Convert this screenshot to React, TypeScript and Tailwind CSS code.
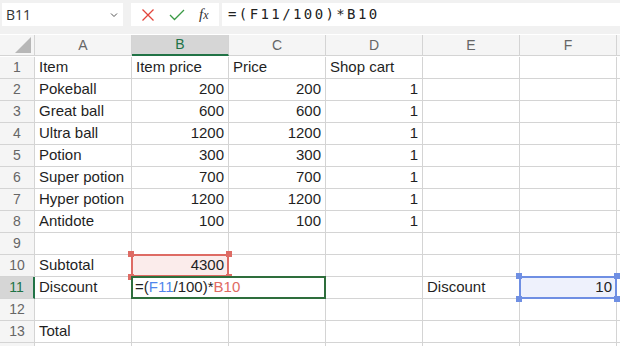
import React from "react";

type Cell = { v?: string; num?: boolean };

const cols = ["A", "B", "C", "D", "E", "F"];

const rows: Cell[][] = [
  [{ v: "Item" }, { v: "Item price" }, { v: "Price" }, { v: "Shop cart" }, {}, {}],
  [{ v: "Pokeball" }, { v: "200", num: true }, { v: "200", num: true }, { v: "1", num: true }, {}, {}],
  [{ v: "Great ball" }, { v: "600", num: true }, { v: "600", num: true }, { v: "1", num: true }, {}, {}],
  [{ v: "Ultra ball" }, { v: "1200", num: true }, { v: "1200", num: true }, { v: "1", num: true }, {}, {}],
  [{ v: "Potion" }, { v: "300", num: true }, { v: "300", num: true }, { v: "1", num: true }, {}, {}],
  [{ v: "Super potion" }, { v: "700", num: true }, { v: "700", num: true }, { v: "1", num: true }, {}, {}],
  [{ v: "Hyper potion" }, { v: "1200", num: true }, { v: "1200", num: true }, { v: "1", num: true }, {}, {}],
  [{ v: "Antidote" }, { v: "100", num: true }, { v: "100", num: true }, { v: "1", num: true }, {}, {}],
  [{}, {}, {}, {}, {}, {}],
  [{ v: "Subtotal" }, { v: "4300", num: true }, {}, {}, {}, {}],
  [{ v: "Discount" }, {}, {}, {}, { v: "Discount" }, { v: "10", num: true }],
  [{}, {}, {}, {}, {}, {}],
  [{ v: "Total" }, {}, {}, {}, {}, {}],
  [{}, {}, {}, {}, {}, {}],
];

function Handles({ color }: { color: string }) {
  const pos = ["-left-[4px] -top-[4px]", "-right-[4px] -top-[4px]", "-left-[4px] -bottom-[4px]", "-right-[4px] -bottom-[4px]"];
  return (
    <>
      {pos.map((p, i) => (
        <span key={i} className={`absolute ${p} w-[6px] h-[6px] ${color} z-20`} />
      ))}
    </>
  );
}

export default function App() {
  return (
    <div className="w-[620px] h-[346px] overflow-hidden bg-white font-['Liberation_Sans',sans-serif] text-[15px] text-[#1f1f1f]">
      {/* Formula bar */}
      <div className="h-[34px] bg-[#f1f1f1] flex items-start pt-[3px] gap-[8px] pl-[2px]">
        <div className="w-[121px] h-[23px] bg-white flex items-center justify-between pl-[4px] pr-[5px]">
          <span className="text-[14px] text-[#333] font-['Open_Sans',sans-serif]">B11</span>
          <svg width="8" height="6" viewBox="0 0 8 6">
            <path d="M1 1.5 L4 4.5 L7 1.5" fill="none" stroke="#555" strokeWidth="1" />
          </svg>
        </div>
        <div className="w-[88px] h-[23px] bg-white flex items-center gap-[14px] pl-[10px]">
          <svg width="14" height="14" viewBox="0 0 14 14">
            <path d="M1.5 1.5 L12.5 12.5 M12.5 1.5 L1.5 12.5" stroke="#e2453c" strokeWidth="1.3" />
          </svg>
          <svg width="16" height="12" viewBox="0 0 16 12">
            <path d="M1 6 L5.5 10.5 L15 1" fill="none" stroke="#3a9a45" strokeWidth="1.3" />
          </svg>
          <span className="font-['Liberation_Serif',serif] italic text-[15px] text-[#333] leading-none">
            f<span className="text-[12px]">x</span>
          </span>
        </div>
        <div className="flex-1 h-[23px] bg-white flex items-center pl-[6px] -ml-[5px]">
          <span className="font-['DejaVu_Sans_Mono',monospace] text-[14px] tracking-[2.4px] text-[#222]">=(F11/100)*B10</span>
        </div>
      </div>

      {/* Grid */}
      <div className="grid grid-cols-[35px_repeat(6,97px)_1fr] auto-rows-[22px] mt-[1px]">
        {/* header row */}
        <div className="h-[21px] bg-[#f5f5f5] border-r border-b border-[#d4d4d4] relative overflow-hidden">
          <svg className="absolute right-[3px] bottom-[2px]" width="16" height="16" viewBox="0 0 16 16">
            <polygon points="16,0 16,16 0,16" fill="#b7b7b7" />
          </svg>
        </div>
        {cols.map((c) => (
          <div
            key={c}
            className={`h-[21px] flex items-center justify-center text-[14px] border-r border-[#d4d4d4] ${
              c === "B" ? "bg-[#d6d6d6] text-[#217346] border-b-2 border-b-[#217346]" : "bg-[#f5f5f5] text-[#666] border-b"
            }`}
          >
            {c}
          </div>
        ))}
        <div className="h-[21px] bg-[#f5f5f5] border-b border-[#d4d4d4]" />

        {rows.map((row, ri) => {
          const r = ri + 1;
          const active = r === 11;
          return (
            <React.Fragment key={r}>
              <div
                className={`flex items-center justify-center text-[14px] border-b border-[#d4d4d4] ${
                  active ? "bg-[#d6d6d6] text-[#217346] border-r-2 border-r-[#217346]" : "bg-[#f5f5f5] text-[#666] border-r"
                }`}
              >
                {r < 14 ? r : ""}
              </div>
              {row.map((cell, ci) => {
                const id = cols[ci] + r;
                return (
                  <div
                    key={id}
                    className={`relative flex items-center px-[4px] border-r border-b border-[#d4d4d4] whitespace-nowrap ${
                      cell.num ? "justify-end" : "justify-start"
                    }`}
                  >
                    {id === "B10" && (
                      <>
                        <div className="absolute -left-[1px] -top-[1px] -right-[1px] -bottom-[1px] border-2 border-[#de6b64] bg-[#fbeceb] z-10" />
                        <Handles color="bg-[#de6b64]" />
                      </>
                    )}
                    {id === "F11" && (
                      <>
                        <div className="absolute -left-[1px] -top-[1px] -right-[1px] -bottom-[1px] border-2 border-[#6f8fe3] bg-[#eef1fc] z-10" />
                        <Handles color="bg-[#6f8fe3]" />
                      </>
                    )}
                    {id === "B11" && (
                      <div className="absolute -left-[1px] -top-[1px] -right-[98px] -bottom-[1px] border-2 border-[#2e6e3c] bg-white z-30 flex items-center pl-[2px]">
                        <span>=(</span>
                        <span className="text-[#4f86ec]">F11</span>
                        <span>/100)*</span>
                        <span className="text-[#e06a62]">B10</span>
                      </div>
                    )}
                    {cell.v && <span className="relative z-20">{cell.v}</span>}
                  </div>
                );
              })}
              <div className="border-b border-[#d4d4d4]" />
            </React.Fragment>
          );
        })}
      </div>
    </div>
  );
}
